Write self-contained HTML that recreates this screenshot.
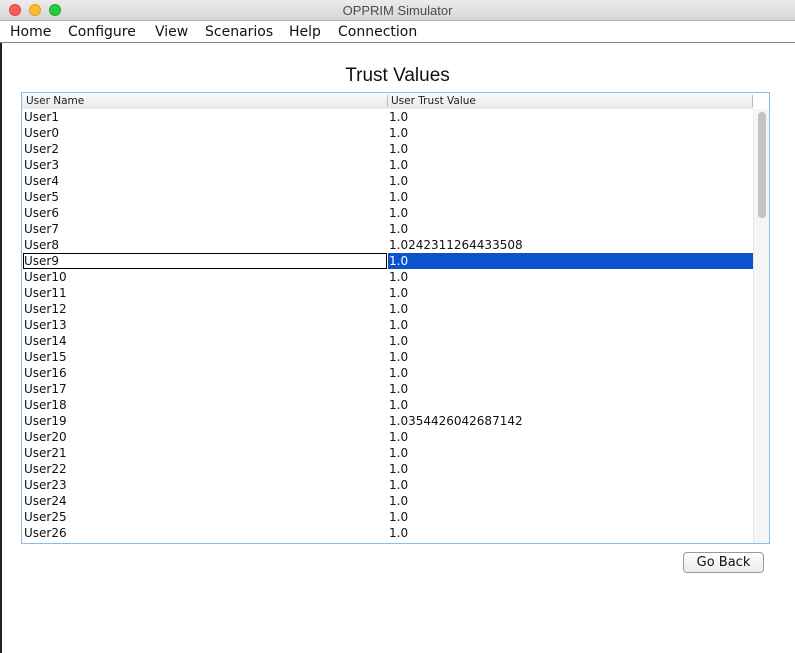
<!DOCTYPE html>
<html><head><style>
*{margin:0;padding:0;box-sizing:border-box}
body{width:795px;height:653px;overflow:hidden;background:#fff;position:relative;font-family:"DejaVu Sans","Liberation Sans",sans-serif}
#title{position:absolute;left:0;top:0;width:795px;height:21px;background:linear-gradient(#ececec,#d6d6d6);border-bottom:1px solid #b4b4b4;text-align:center;font:13px "Liberation Sans",sans-serif;line-height:21px;color:#4d4d4d}
.dot{position:absolute;top:4px;width:12px;height:12px;border-radius:50%}
#menu{position:absolute;left:0;top:21px;width:795px;height:22px;background:#fff;border-bottom:1px solid #8a8a8a;font-size:14px;line-height:23px;color:#111}
#menu span{position:absolute;top:0}
#edge{position:absolute;left:0;top:43px;width:2px;height:610px;background:#222}
#h{position:absolute;left:0;width:795px;top:65px;text-align:center;font:19px "Liberation Sans",sans-serif;color:#111}
#tbl{position:absolute;left:21px;top:92px;width:749px;height:452px;border:1px solid #8fbbe6}
#hdr{position:absolute;left:0;top:0;width:731px;height:16px;background:linear-gradient(#fafafa,#e8e8e8);font-size:10.5px;line-height:17px;color:#222}
.row{position:absolute;left:0;width:731px;height:16px;font-size:12px;line-height:17px;color:#111}
.c1{position:absolute;left:2px}
.c2{position:absolute;left:367px}
#sb{position:absolute;left:731px;top:16px;width:16px;height:434px;background:#f5f5f5;border-left:1px solid #e8e8e8}
#thumb{position:absolute;left:4px;top:3px;width:8px;height:106px;border-radius:4px;background:#c2c2c2}
#btn{position:absolute;left:683px;top:552px;width:81px;height:21px;border:1px solid #9a9a9a;border-radius:4px;background:linear-gradient(#fff,#ececec);text-align:center;font-size:13px;line-height:20px;color:#111}
</style></head><body>
<div id="title">OPPRIM Simulator
<div class="dot" style="left:9px;background:#fc5b57;border:1px solid #e0443e"></div>
<div class="dot" style="left:29px;background:#fdbc2e;border:1px solid #dea123"></div>
<div class="dot" style="left:49px;background:#29c941;border:1px solid #1aab29"></div>
</div>
<div id="menu"><span style="left:10px">Home</span><span style="left:68px">Configure</span><span style="left:155px">View</span><span style="left:205px">Scenarios</span><span style="left:289px">Help</span><span style="left:338px">Connection</span></div>
<div id="edge"></div>
<div id="h">Trust Values</div>
<div id="tbl">
<div id="hdr"><span style="position:absolute;left:4px">User Name</span><span style="position:absolute;left:365px;top:2px;width:1px;height:12px;background:#bbb"></span><span style="position:absolute;left:369px">User Trust Value</span><span style="position:absolute;left:730px;top:2px;width:1px;height:12px;background:#bbb"></span></div>
<div class="row" style="top:16px"><span class="c1">User1</span><span class="c2">1.0</span></div>
<div class="row" style="top:32px"><span class="c1">User0</span><span class="c2">1.0</span></div>
<div class="row" style="top:48px"><span class="c1">User2</span><span class="c2">1.0</span></div>
<div class="row" style="top:64px"><span class="c1">User3</span><span class="c2">1.0</span></div>
<div class="row" style="top:80px"><span class="c1">User4</span><span class="c2">1.0</span></div>
<div class="row" style="top:96px"><span class="c1">User5</span><span class="c2">1.0</span></div>
<div class="row" style="top:112px"><span class="c1">User6</span><span class="c2">1.0</span></div>
<div class="row" style="top:128px"><span class="c1">User7</span><span class="c2">1.0</span></div>
<div class="row" style="top:144px"><span class="c1">User8</span><span class="c2">1.0242311264433508</span></div>
<div class="row" style="top:160px"><span style="position:absolute;left:1px;top:0;width:364px;height:16px;border:1px solid #000"></span><span style="position:absolute;left:366px;top:0;width:365px;height:16px;background:#0b52cf"></span><span class="c1">User9</span><span class="c2" style="color:#fff">1.0</span></div>
<div class="row" style="top:176px"><span class="c1">User10</span><span class="c2">1.0</span></div>
<div class="row" style="top:192px"><span class="c1">User11</span><span class="c2">1.0</span></div>
<div class="row" style="top:208px"><span class="c1">User12</span><span class="c2">1.0</span></div>
<div class="row" style="top:224px"><span class="c1">User13</span><span class="c2">1.0</span></div>
<div class="row" style="top:240px"><span class="c1">User14</span><span class="c2">1.0</span></div>
<div class="row" style="top:256px"><span class="c1">User15</span><span class="c2">1.0</span></div>
<div class="row" style="top:272px"><span class="c1">User16</span><span class="c2">1.0</span></div>
<div class="row" style="top:288px"><span class="c1">User17</span><span class="c2">1.0</span></div>
<div class="row" style="top:304px"><span class="c1">User18</span><span class="c2">1.0</span></div>
<div class="row" style="top:320px"><span class="c1">User19</span><span class="c2">1.0354426042687142</span></div>
<div class="row" style="top:336px"><span class="c1">User20</span><span class="c2">1.0</span></div>
<div class="row" style="top:352px"><span class="c1">User21</span><span class="c2">1.0</span></div>
<div class="row" style="top:368px"><span class="c1">User22</span><span class="c2">1.0</span></div>
<div class="row" style="top:384px"><span class="c1">User23</span><span class="c2">1.0</span></div>
<div class="row" style="top:400px"><span class="c1">User24</span><span class="c2">1.0</span></div>
<div class="row" style="top:416px"><span class="c1">User25</span><span class="c2">1.0</span></div>
<div class="row" style="top:432px"><span class="c1">User26</span><span class="c2">1.0</span></div>
<div id="sb"><div id="thumb"></div></div>
</div>
<div id="btn">Go Back</div>
</body></html>
